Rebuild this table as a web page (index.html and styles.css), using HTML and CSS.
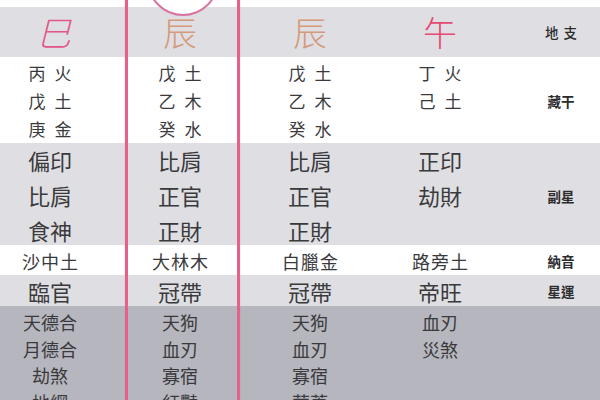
FILE: index.html
```html
<!DOCTYPE html>
<html lang="zh-Hant">
<head>
<meta charset="utf-8">
<title>八字命盤</title>
<link rel="stylesheet" href="styles.css">
</head>
<body>
<div class="sheet">
  <div class="top"></div>

  <div class="band branch">
    <div class="cell"><span class="br br-si">巳</span></div>
    <div class="cell"><span class="br br-chen">辰</span></div>
    <div class="cell"><span class="br br-chen">辰</span></div>
    <div class="cell"><span class="br br-wu">午</span></div>
    <div class="cell label spaced">地支</div>
  </div>

  <div class="band hidden-stems">
    <div class="cell"><span>丙火</span><span>戊土</span><span>庚金</span></div>
    <div class="cell"><span>戊土</span><span>乙木</span><span>癸水</span></div>
    <div class="cell"><span>戊土</span><span>乙木</span><span>癸水</span></div>
    <div class="cell"><span>丁火</span><span>己土</span></div>
    <div class="cell label">藏干</div>
  </div>

  <div class="band stars">
    <div class="cell"><span>偏印</span><span>比肩</span><span>食神</span></div>
    <div class="cell"><span>比肩</span><span>正官</span><span>正財</span></div>
    <div class="cell"><span>比肩</span><span>正官</span><span>正財</span></div>
    <div class="cell"><span>正印</span><span>劫財</span></div>
    <div class="cell label">副星</div>
  </div>

  <div class="band nayin">
    <div class="cell"><span>沙中土</span></div>
    <div class="cell"><span>大林木</span></div>
    <div class="cell"><span>白臘金</span></div>
    <div class="cell"><span>路旁土</span></div>
    <div class="cell label">納音</div>
  </div>

  <div class="band fortune">
    <div class="cell"><span>臨官</span></div>
    <div class="cell"><span>冠帶</span></div>
    <div class="cell"><span>冠帶</span></div>
    <div class="cell"><span>帝旺</span></div>
    <div class="cell label">星運</div>
  </div>

  <div class="band shensha">
    <div class="cell"><span>天德合</span><span>月德合</span><span>劫煞</span><span>地網</span></div>
    <div class="cell"><span>天狗</span><span>血刃</span><span>寡宿</span><span>紅豔</span></div>
    <div class="cell"><span>天狗</span><span>血刃</span><span>寡宿</span><span>華蓋</span></div>
    <div class="cell"><span>血刃</span><span>災煞</span></div>
    <div class="cell label"></div>
  </div>

  <div class="highlight"></div>
  <div class="ring"></div>
</div>
</body>
</html>
```

FILE: styles.css
```css
html, body {
  margin: 0;
  padding: 0;
  background: #ffffff;
}

.sheet {
  position: relative;
  width: 600px;
  height: 400px;
  overflow: hidden;
  font-family: "Noto Sans CJK TC", "Noto Sans CJK SC", "Noto Sans", sans-serif;
  color: #3a3a3c;
  background: #ffffff;
}

.top {
  height: 7px;
  background: #ffffff;
}

.band {
  display: grid;
  grid-template-columns: 130px 130px 130px 130px 112px;
  margin-left: -15px;
}

.cell {
  display: flex;
  flex-direction: column;
  align-items: center;
}

.cell span {
  display: block;
  white-space: nowrap;
}

.label {
  justify-content: center;
  font-size: 13.5px;
  font-weight: 700;
  color: #2c2c2e;
}

.label.spaced {
  letter-spacing: 5px;
  padding-left: 5px;
  font-weight: 500;
}

/* 地支 */
.branch {
  height: 50px;
  background: #dfdfe3;
}

.branch .cell {
  justify-content: center;
}

.br {
  font-size: 34px;
  line-height: 50px;
  font-weight: 300;
}

.br-si {
  color: #e2578a;
  font-style: italic;
  padding-left: 8px;
}

.br-chen {
  color: #d59a7b;
}

.br-wu {
  color: #e44a72;
}

/* 藏干 */
.hidden-stems {
  height: 86px;
  background: #ffffff;
}

.hidden-stems .cell {
  padding-top: 2px;
}

.hidden-stems .cell:not(.label) span {
  font-size: 17px;
  line-height: 28px;
  letter-spacing: 9px;
  padding-left: 9px;
}

/* 副星 */
.stars {
  height: 102px;
  background: #dfdfe3;
}

.stars .cell:not(.label) span {
  font-size: 22px;
  line-height: 35px;
}

/* 納音 */
.nayin {
  height: 30px;
  background: #ffffff;
}

.nayin .cell:not(.label) span {
  font-size: 18px;
  line-height: 32px;
  letter-spacing: 1px;
  padding-left: 1px;
}

/* 星運 */
.fortune {
  height: 31px;
  background: #dfdfe3;
}

.fortune .cell:not(.label) span {
  font-size: 22px;
  line-height: 32px;
}

/* 神煞 */
.shensha {
  height: 120px;
  background: #b6b6be;
}

.shensha .cell {
  padding-top: 3px;
}

.shensha .cell:not(.label) span {
  font-size: 18px;
  line-height: 26.5px;
}

/* highlight frame around the day pillar */
.highlight {
  position: absolute;
  left: 125px;
  top: -4px;
  width: 109px;
  height: 420px;
  border: 3px solid #e5618a;
  box-shadow: 0 0 1px rgba(229, 97, 138, 0.5);
}

.ring {
  position: absolute;
  left: 147px;
  top: -56px;
  width: 68px;
  height: 68px;
  border: 2px solid #d874a0;
  border-radius: 50%;
  background: #ffffff;
}
```
